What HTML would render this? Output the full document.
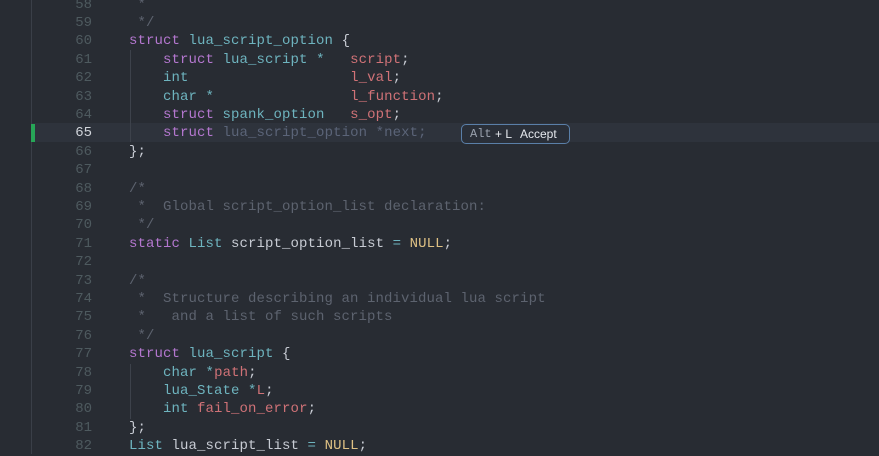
<!DOCTYPE html>
<html><head><meta charset="utf-8"><style>
html,body{margin:0;padding:0;}
body{width:879px;height:454px;background:#282c33;position:relative;overflow:hidden;font-family:"Liberation Mono",monospace;font-size:14px;}
.gut{position:absolute;left:0;top:0;width:31px;height:454px;background:#282c33;border-right:1px solid #3a3f48;}
#c{position:absolute;left:0;top:1.5px;width:879px;height:454px;}
.ln{position:absolute;left:40px;width:52px;text-align:right;color:#4e5a5f;height:18px;line-height:18px;}
.cl{position:absolute;left:129px;white-space:pre;color:#c8ccd4;height:18px;line-height:18px;letter-spacing:0.1px;}
.k{color:#b477cf}.t{color:#6eb4bf}.v{color:#d07277}.c{color:#5d636f}.n{color:#dfc184}.g{color:#5b6478}
.guide{position:absolute;left:130px;width:1px;background:#3d424b;}
</style></head><body>
<div class="gut"></div>
<div style="position:absolute;left:32px;top:123px;width:847px;height:19px;background:#2e333c"></div>
<div style="position:absolute;left:31px;top:124px;width:4px;height:18px;background:#27a657"></div>
<div class="guide" style="top:50px;height:92px"></div>
<div class="guide" style="top:364px;height:55px"></div>
<div style="position:absolute;left:461px;top:124px;width:107px;height:18px;border:1px solid #5a7fa8;border-radius:5px;background:#2a2f38;color:#e6e9ee;font-family:'Liberation Sans',sans-serif;font-size:12px;line-height:18px;white-space:pre"><span style="position:absolute;left:8px;font-family:'Liberation Mono',monospace;color:#9aa2ae;font-size:12px">Alt</span><span style="position:absolute;left:33px">+ L</span><span style="position:absolute;left:58px">Accept</span></div>
<div id="c">
<div class="ln" style="top:-6px">58</div><div class="cl c" style="top:-6px"> *</div>
<div class="ln" style="top:12.4px">59</div><div class="cl c" style="top:12.4px"> */</div>
<div class="ln" style="top:30.8px">60</div><div class="cl" style="top:30.8px"><span class="k">struct</span> <span class="t">lua_script_option</span> {</div>
<div class="ln" style="top:49.2px">61</div><div class="cl" style="top:49.2px">    <span class="k">struct</span> <span class="t">lua_script</span> <span class="t">*</span>   <span class="v">script</span>;</div>
<div class="ln" style="top:67.6px">62</div><div class="cl" style="top:67.6px">    <span class="t">int</span>                   <span class="v">l_val</span>;</div>
<div class="ln" style="top:86px">63</div><div class="cl" style="top:86px">    <span class="t">char</span> <span class="t">*</span>                <span class="v">l_function</span>;</div>
<div class="ln" style="top:104.4px">64</div><div class="cl" style="top:104.4px">    <span class="k">struct</span> <span class="t">spank_option</span>   <span class="v">s_opt</span>;</div>
<div class="ln" style="top:122.8px;color:#d0d4da">65</div><div class="cl" style="top:122.8px">    <span class="k">struct</span> <span class="g">lua_script_option *next;</span></div>
<div class="ln" style="top:141.2px">66</div><div class="cl" style="top:141.2px">};</div>
<div class="ln" style="top:159.6px">67</div>
<div class="ln" style="top:178px">68</div><div class="cl c" style="top:178px">/*</div>
<div class="ln" style="top:196.4px">69</div><div class="cl c" style="top:196.4px"> *  Global script_option_list declaration:</div>
<div class="ln" style="top:214.8px">70</div><div class="cl c" style="top:214.8px"> */</div>
<div class="ln" style="top:233.2px">71</div><div class="cl" style="top:233.2px"><span class="k">static</span> <span class="t">List</span> script_option_list <span class="t">=</span> <span class="n">NULL</span>;</div>
<div class="ln" style="top:251.6px">72</div>
<div class="ln" style="top:270px">73</div><div class="cl c" style="top:270px">/*</div>
<div class="ln" style="top:288.4px">74</div><div class="cl c" style="top:288.4px"> *  Structure describing an individual lua script</div>
<div class="ln" style="top:306.8px">75</div><div class="cl c" style="top:306.8px"> *   and a list of such scripts</div>
<div class="ln" style="top:325.2px">76</div><div class="cl c" style="top:325.2px"> */</div>
<div class="ln" style="top:343.6px">77</div><div class="cl" style="top:343.6px"><span class="k">struct</span> <span class="t">lua_script</span> {</div>
<div class="ln" style="top:362px">78</div><div class="cl" style="top:362px">    <span class="t">char</span> <span class="t">*</span><span class="v">path</span>;</div>
<div class="ln" style="top:380.4px">79</div><div class="cl" style="top:380.4px">    <span class="t">lua_State</span> <span class="t">*</span><span class="v">L</span>;</div>
<div class="ln" style="top:398.8px">80</div><div class="cl" style="top:398.8px">    <span class="t">int</span> <span class="v">fail_on_error</span>;</div>
<div class="ln" style="top:417.2px">81</div><div class="cl" style="top:417.2px">};</div>
<div class="ln" style="top:435.6px">82</div><div class="cl" style="top:435.6px"><span class="t">List</span> lua_script_list <span class="t">=</span> <span class="n">NULL</span>;</div>
</div>
</body></html>
